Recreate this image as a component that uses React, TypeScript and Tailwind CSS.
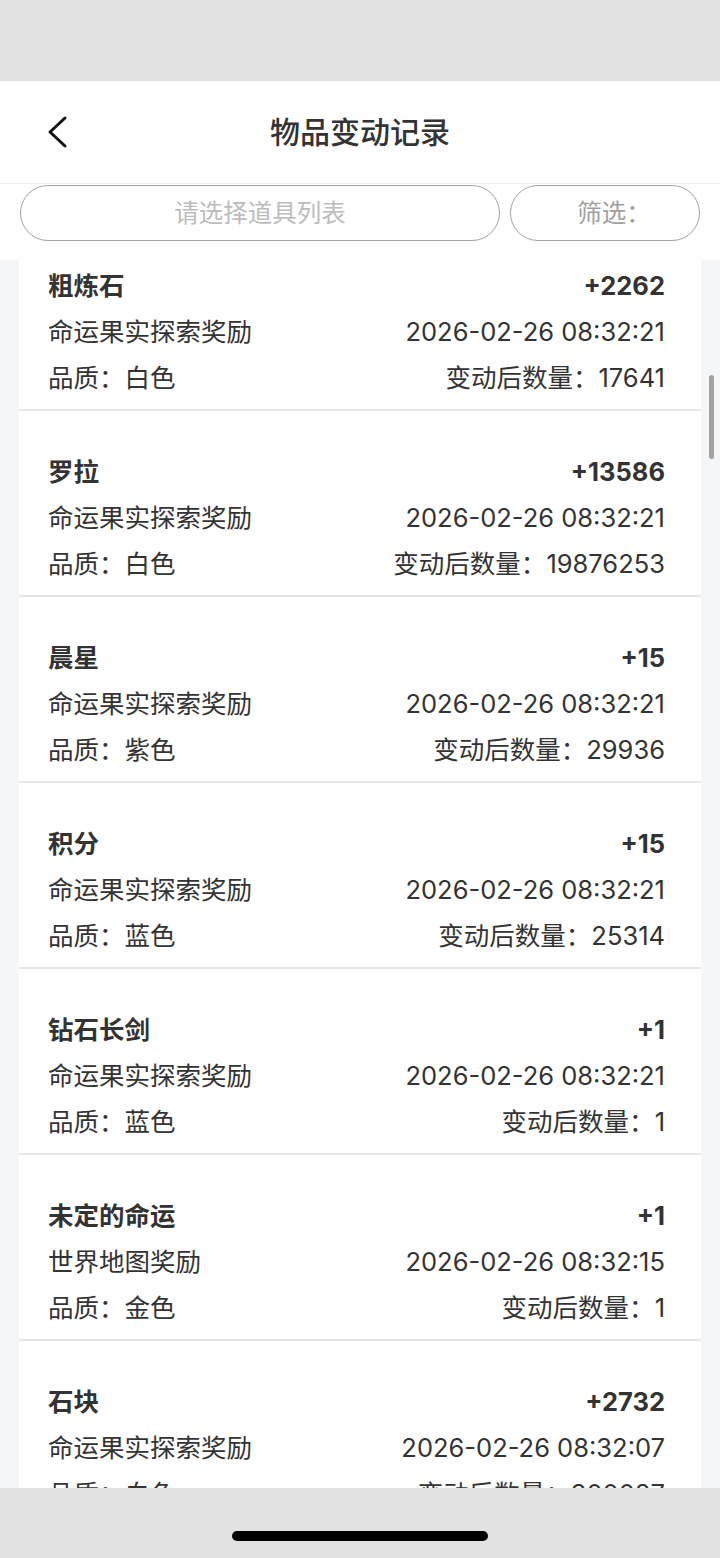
const records = [
  { name: "粗炼石", delta: "+2262", source: "命运果实探索奖励", time: "2026-02-26 08:32:21", quality: "白色", after: "17641" },
  { name: "罗拉", delta: "+13586", source: "命运果实探索奖励", time: "2026-02-26 08:32:21", quality: "白色", after: "19876253" },
  { name: "晨星", delta: "+15", source: "命运果实探索奖励", time: "2026-02-26 08:32:21", quality: "紫色", after: "29936" },
  { name: "积分", delta: "+15", source: "命运果实探索奖励", time: "2026-02-26 08:32:21", quality: "蓝色", after: "25314" },
  { name: "钻石长剑", delta: "+1", source: "命运果实探索奖励", time: "2026-02-26 08:32:21", quality: "蓝色", after: "1" },
  { name: "未定的命运", delta: "+1", source: "世界地图奖励", time: "2026-02-26 08:32:15", quality: "金色", after: "1" },
  { name: "石块", delta: "+2732", source: "命运果实探索奖励", time: "2026-02-26 08:32:07", quality: "白色", after: "300087" },
];

type Record = (typeof records)[number];

function RecordCard({ r }: { r: Record }) {
  return (
    <div className="bg-white border-b-2 border-[#e6e6e8] pl-[29px] pr-[36px] pt-[38px] pb-[8px] text-[25.5px] text-[#333] whitespace-nowrap">
      <div className="h-[46px] flex items-center justify-between font-bold">
        <span>{r.name}</span>
        <span>{r.delta}</span>
      </div>
      <div className="h-[47px] flex items-center justify-between">
        <span>{r.source}</span>
        <span>{r.time}</span>
      </div>
      <div className="h-[45px] flex items-center justify-between">
        <span>品质：{r.quality}</span>
        <span>变动后数量：{r.after}</span>
      </div>
    </div>
  );
}

export default function App() {
  return (
    <div
      className="w-[720px] h-[1558px] flex flex-col overflow-hidden"
      style={{ fontFamily: 'Inter, "Noto Sans CJK SC", sans-serif' }}
    >
      <div className="h-[81px] shrink-0 bg-[#e1e1e1]" />

      <div className="h-[103px] shrink-0 bg-white border-b border-[#ececec] relative flex items-center justify-center">
        <svg className="absolute left-[44px] top-[34px]" width="28" height="34" viewBox="0 0 28 34" fill="none">
          <polyline points="21,3 6,17 21,31" stroke="#111" strokeWidth="3" strokeLinecap="round" strokeLinejoin="round" />
        </svg>
        <h1 className="text-[30px] font-medium text-[#333]">物品变动记录</h1>
      </div>

      <div className="h-[76px] shrink-0 bg-white flex gap-[10px] pl-[20px] pr-[20px] pt-[1px]">
        <div className="w-[480px] h-[56px] rounded-full border-[1.5px] border-[#a2a2a2] flex items-center justify-center text-[24.5px] text-[#bcbcbc]">
          请选择道具列表
        </div>
        <div className="w-[190px] h-[56px] rounded-full border-[1.5px] border-[#a2a2a2] flex items-center justify-center pl-[18px] text-[24.5px] text-[#a0a0a0]">
          筛选：
        </div>
      </div>

      <div className="flex-1 overflow-hidden bg-[#f5f6f8] px-[19px] relative">
        <div className="-mt-[35px]">
          {records.map((r) => (
            <RecordCard key={r.name} r={r} />
          ))}
        </div>
        <div className="absolute right-[6px] top-[115px] w-[5px] h-[84px] rounded-full bg-[#a3a3a3]" />
      </div>

      <div className="h-[70px] shrink-0 bg-[#e1e1e1] flex justify-center pt-[43px]">
        <div className="w-[256px] h-[10px] rounded-full bg-black" />
      </div>
    </div>
  );
}
